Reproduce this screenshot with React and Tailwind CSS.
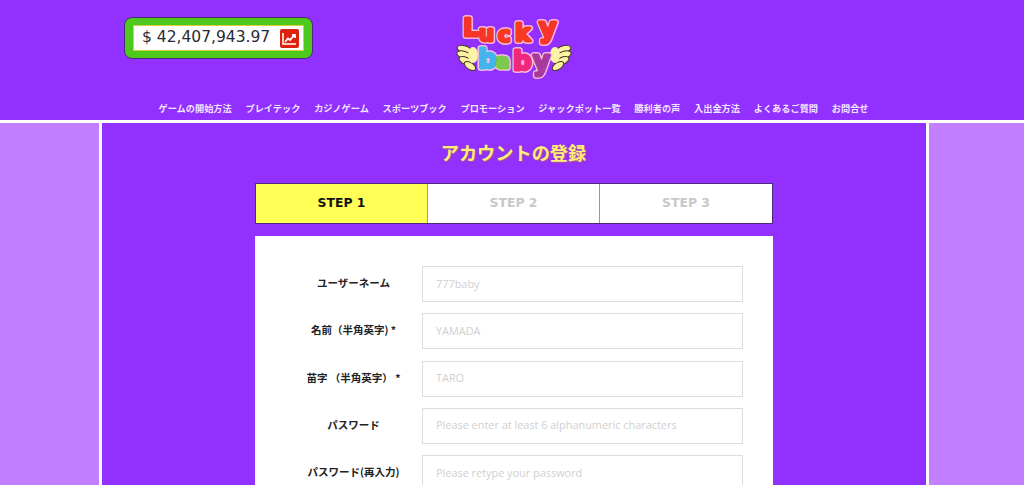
import React from 'react'

const navItems = [
  'ゲームの開始方法',
  'プレイテック',
  'カジノゲーム',
  'スポーツブック',
  'プロモーション',
  'ジャックポット一覧',
  '勝利者の声',
  '入出金方法',
  'よくあるご質問',
  'お問合せ',
]

const fields = [
  { label: 'ユーザーネーム', placeholder: '777baby' },
  { label: '名前（半角英字) *', placeholder: 'YAMADA' },
  { label: '苗字 （半角英字） *', placeholder: 'TARO' },
  { label: 'パスワード', placeholder: 'Please enter at least 6 alphanumeric characters' },
  { label: 'パスワード(再入力)', placeholder: 'Please retype your password' },
]

const steps = ['STEP 1', 'STEP 2', 'STEP 3']

const logoLetters = [
  { c: 'L', x: 8, y: 25, size: 25, fill: '#f5342a' },
  { c: 'u', x: 24, y: 30, size: 21, fill: '#f5342a' },
  { c: 'c', x: 43, y: 31, size: 21, fill: '#f83a22' },
  { c: 'k', x: 60, y: 30, size: 23, fill: '#f83a22' },
  { c: 'y', x: 84, y: 26, size: 27, fill: '#f5342a' },
  { c: 'b', x: 23, y: 57, size: 26, fill: '#45b4ee' },
  { c: 'a', x: 41, y: 57, size: 20, fill: '#7ec850' },
  { c: 'b', x: 58, y: 59, size: 26, fill: '#f0287c' },
  { c: 'y', x: 78, y: 59, size: 26, fill: '#a83a9c' },
]

const Wing = ({ flip }) => (
  <g transform={flip ? 'translate(118 0) scale(-1 1)' : undefined} fill="#fdf3a6" stroke="#4a3516" strokeWidth="1">
    <ellipse cx="9" cy="38" rx="7" ry="3.4" transform="rotate(12 9 38)" />
    <ellipse cx="9" cy="44" rx="7.5" ry="3.6" transform="rotate(18 9 44)" />
    <ellipse cx="11" cy="50" rx="7.5" ry="3.6" transform="rotate(25 11 50)" />
    <ellipse cx="15" cy="55" rx="6.5" ry="3.4" transform="rotate(32 15 55)" />
    <ellipse cx="18" cy="44" rx="5" ry="8" fill="#fdf3a6" stroke="none" />
  </g>
)

const Logo = () => (
  <svg width="118" height="74" viewBox="0 0 118 74" className="block overflow-visible">
    <Wing />
    <Wing flip />
    <g fontFamily="'DejaVu Sans', sans-serif" fontWeight="700" strokeLinejoin="round">
      {logoLetters.map((l, i) => (
        <text
          key={i}
          x={l.x}
          y={l.y}
          fontSize={l.size}
          fill={l.fill}
          stroke="#ffc8dc"
          strokeWidth="5.5"
          paintOrder="stroke"
        >
          {l.c}
        </text>
      ))}
      {logoLetters.map((l, i) => (
        <text
          key={i}
          x={l.x}
          y={l.y}
          fontSize={l.size}
          fill={l.fill}
          stroke={l.fill}
          strokeWidth="3"
          aria-hidden="true"
        >
          {l.c}
        </text>
      ))}
    </g>
  </svg>
)

const App = () => {
  return (
    <div className="h-[485px] overflow-hidden bg-[#9130ff] font-['Noto_Sans_CJK_JP','Liberation_Sans',sans-serif]">
      {/* Header */}
      <header className="h-[120px] relative">
        <div className="flex items-start pl-[124px] pt-[17px] h-[95px]">
          <div className="w-[189px] h-[42px] bg-[#4fc81e] border border-[#4b2a80] rounded-[8px] px-[8px] py-[7px]">
            <div className="h-full bg-white border border-[#d8d040] flex items-center pl-[8px] pr-[4px] justify-between">
              <span className="font-['DejaVu_Sans',sans-serif] text-[15.5px] leading-none text-[#2a2a33]">$ 42,407,943.97</span>
              <span className="w-[19px] h-[19px] rounded-[2px] bg-[#dd2211] flex items-center justify-center">
                <svg width="15" height="13" viewBox="0 0 15 13">
                  <path d="M1 1 V12 H14" stroke="#fff" strokeWidth="1.5" fill="none" />
                  <path d="M3 10 L6 6.5 L8 8 L12 3.5 M10 3 H13 V6" stroke="#fff" strokeWidth="1.8" fill="none" />
                </svg>
              </span>
            </div>
          </div>
        </div>
        <div className="absolute left-[455px] top-[11px]">
          <Logo />
        </div>
        <nav className="flex justify-center gap-[13.75px] pt-[6px] text-[9.2px] leading-[14px] font-bold text-[#f4e6ff] pl-[3px]">
          {navItems.map((item) => (
            <a key={item} className="whitespace-nowrap">{item}</a>
          ))}
        </nav>
      </header>

      {/* Body */}
      <div className="flex border-t-[3px] border-white h-[365px]">
        <div className="w-[99px] bg-[#c27fff]" />
        <main className="flex-1 border-x-[3px] border-white">
          <h1 className="pt-[16px] text-center text-[18.2px] leading-[26px] font-bold text-[#ffee7a] [text-shadow:1px_1px_1px_#b0508c] pr-[1px]">
            アカウントの登録
          </h1>
          <div className="w-[518px] mt-[18px] ml-[153px]">
            <div className="flex h-[41px] border border-[#4b2a80] bg-white">
              {steps.map((step, i) => (
                <div
                  key={step}
                  className={
                    i === 0
                      ? "w-[172px] flex items-center justify-center bg-[#ffff55] text-[#111] border-r border-[#a0a060] font-['DejaVu_Sans',sans-serif] font-bold text-[12.4px]"
                      : i === 1
                        ? "w-[172px] flex items-center justify-center text-[#c8c8c8] border-r border-[#999] font-['DejaVu_Sans',sans-serif] font-bold text-[12.4px]"
                        : "flex-1 flex items-center justify-center text-[#c8c8c8] font-['DejaVu_Sans',sans-serif] font-bold text-[12.4px]"
                  }
                >
                  {step}
                </div>
              ))}
            </div>
            <div className="mt-[12px] bg-white h-[300px] pt-[30px] pl-[30px] flex flex-col gap-[11.25px]">
              {fields.map((field) => (
                <div key={field.label} className="flex items-center">
                  <label className="w-[137px] text-center text-[10.5px] leading-[14px] pb-[2px] font-bold text-[#222] whitespace-nowrap">
                    {field.label}
                  </label>
                  <input
                    placeholder={field.placeholder}
                    className="w-[321px] h-[36px] border border-[#dddddd] px-[13px] pb-[2px] text-[10.9px] font-['Open_Sans',sans-serif] placeholder:text-[#cfcfcf] bg-white"
                  />
                </div>
              ))}
            </div>
          </div>
        </main>
        <div className="w-[95px] bg-[#c27fff]" />
      </div>
    </div>
  )
}

export default App
